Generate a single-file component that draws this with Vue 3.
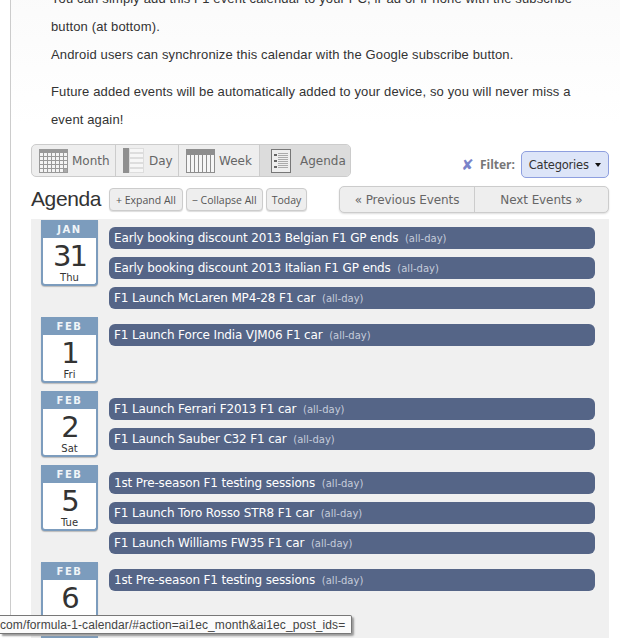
<script setup>
const groups = [
  { mon: 'JAN', day: 31, dow: 'Thu', events: ['Early booking discount 2013 Belgian F1 GP ends', 'Early booking discount 2013 Italian F1 GP ends', 'F1 Launch McLaren MP4-28 F1 car'] },
  { mon: 'FEB', day: 1, dow: 'Fri', events: ['F1 Launch Force India VJM06 F1 car'] },
  { mon: 'FEB', day: 2, dow: 'Sat', events: ['F1 Launch Ferrari F2013 F1 car', 'F1 Launch Sauber C32 F1 car'] },
  { mon: 'FEB', day: 5, dow: 'Tue', events: ['1st Pre-season F1 testing sessions', 'F1 Launch Toro Rosso STR8 F1 car', 'F1 Launch Williams FW35 F1 car'] },
  { mon: 'FEB', day: 6, dow: 'Wed', events: ['1st Pre-season F1 testing sessions'] },
  { mon: '', day: '', dow: '', events: [] },
]
</script>

<template>
  <div class="page">
    <main class="content">
      <section class="intro">
        <p class="clip">You can simply add this F1 event calendar to your PC, iPad or iPhone with the subscribe<br>button (at bottom).<br>Android users can synchronize this calendar with the Google subscribe button.</p>
        <p>Future added events will be automatically added to your device, so you will never miss a<br>event again!</p>
      </section>

      <section class="calendar">
        <div class="topbar">
          <div class="views">
            <a class="view month">
              <svg width="29" height="24" viewBox="0 0 29 24"><rect width="29" height="24" fill="#999"/><g fill="#f4f4f4"><template v-for="r in 5" :key="r"><rect v-for="c in 7" :key="c" :x="(c-1)*4+1" :y="(r-1)*4+4" width="3" height="3"/></template></g><rect x="25" y="20" width="3" height="3" fill="#aaa"/></svg>
              Month
            </a>
            <a class="view day">
              <svg width="21" height="25" viewBox="0 0 21 25"><rect width="6" height="25" fill="#8f8f8f"/><rect x="6" width="15" height="25" fill="#ddd"/><g fill="#f6f6f6"><rect x="7" y="1" width="13" height="3"/><rect x="7" y="6" width="13" height="3"/><rect x="7" y="11" width="13" height="3"/><rect x="7" y="16" width="13" height="3"/><rect x="7" y="21" width="13" height="3"/></g></svg>
              Day
            </a>
            <a class="view week">
              <svg width="29" height="24" viewBox="0 0 29 24"><rect width="29" height="24" fill="#8e8e8e"/><g fill="#f6f6f6"><rect v-for="c in 7" :key="c" :x="(c-1)*4+1" y="6" width="3" height="17"/></g></svg>
              Week
            </a>
            <a class="view agenda active">
              <svg width="20" height="24" viewBox="0 0 20 24"><rect x=".5" y=".5" width="19" height="23" fill="#eee" stroke="#777"/><g fill="#666"><rect x="3" y="5" width="3" height="2"/><rect x="3" y="11" width="3" height="2"/><rect x="3" y="17" width="3" height="2"/></g><g fill="#aaa"><rect x="7" y="4" width="10" height="1"/><rect x="7" y="6" width="10" height="1"/><rect x="7" y="8" width="10" height="1"/><rect x="7" y="10" width="10" height="1"/><rect x="7" y="12" width="10" height="1"/><rect x="7" y="14" width="10" height="1"/><rect x="7" y="16" width="10" height="1"/><rect x="7" y="18" width="10" height="1"/></g></svg>
              Agenda
            </a>
          </div>
          <div class="filter">
            <span class="x">✘</span>
            <b>Filter:</b>
            <button class="cats">Categories <i></i></button>
          </div>
        </div>

        <div class="titlebar">
          <h2>Agenda</h2>
          <div class="tools">
            <button>+ Expand All</button>
            <button>− Collapse All</button>
            <button>Today</button>
          </div>
          <div class="pager">
            <a>« Previous Events</a>
            <a>Next Events »</a>
          </div>
        </div>

        <div class="list">
          <div v-for="(g, i) in groups" :key="i" class="group">
            <div class="date">
              <div class="mon">{{ g.mon }}</div>
              <div class="num">{{ g.day }}</div>
              <div class="dow">{{ g.dow }}</div>
            </div>
            <div class="events">
              <div v-for="e in g.events" :key="e" class="event">{{ e }} <span>(all-day)</span></div>
            </div>
          </div>
        </div>
      </section>
    </main>
    <div class="status">com/formula-1-calendar/#action=ai1ec_month&amp;ai1ec_post_ids=</div>
  </div>
</template>

<style>
html, body { margin: 0; background: #fff; }
</style>

<style scoped>
.page { position: relative; width: 620px; height: 638px; overflow: hidden; font-family: "Liberation Sans", Arial, sans-serif; background: #fff; }
.content { margin-left: 10px; height: 638px; border-left: 1px solid #ccc; box-sizing: border-box; padding-left: 20px; padding-right: 11px; background: linear-gradient(#fafafa, #fff 140px); }
.intro { margin-top: -15px; padding-left: 20px; font-size: 13px; line-height: 28px; color: #333; letter-spacing: .14px; height: 157px; }
.intro p { margin: 0 0 9px; white-space: nowrap; }
.calendar { background: #fff; }
.topbar { display: flex; justify-content: space-between; align-items: flex-end; height: 35px; }
.views { display: flex; height: 33px; box-sizing: border-box; border: 1px solid #ccc; border-radius: 5px; background: #eee; }
.view { display: flex; align-items: center; gap: 4px; font: 12px "DejaVu Sans", sans-serif; color: #666; border-right: 1px solid #ccc; box-sizing: border-box; flex: none; }
.month { width: 84px; padding-left: 7px; }
.day { width: 63px; padding-left: 7px; gap: 5px; }
.week { width: 81px; padding-left: 7px; }
.agenda { width: 90px; padding-left: 11px; gap: 9px; border-right: 0; background: #dcdcdc; border-radius: 0 4px 4px 0; }
.filter { display: flex; align-items: center; gap: 6px; margin-bottom: -1px; font: 13px "DejaVu Sans", sans-serif; }
.x { color: #7a83c9; font-size: 15px; }
.filter b { color: #777; font: 700 12px "Open Sans", sans-serif; }
.cats { width: 88px; height: 27px; padding: 0; border: 1px solid #8e9fdf; border-radius: 5px; background: #dde5f8; color: #333; font: 11.5px "DejaVu Sans", sans-serif; letter-spacing: -.2px; }
.cats i { display: inline-block; margin-left: 3px; vertical-align: 2px; border: 3px solid transparent; border-top: 4px solid #111; border-bottom: 0; }
.titlebar { display: flex; align-items: center; height: 42px; }
h2 { margin: 2px 9px 0 0; font: 400 21px "Liberation Sans", Arial, sans-serif; letter-spacing: -.4px; color: #333; width: 69px; }
.tools { display: flex; gap: 3px; margin-top: 3px; }
.tools button { height: 23px; padding: 0 6px; box-sizing: border-box; border: 1px solid #ccc; border-radius: 4px; background: #eee; color: #555; font: 10.5px "Open Sans", sans-serif; box-shadow: 0 1px 1px #ddd; white-space: nowrap; }
.tools button:nth-child(2) { padding: 0 5px; }
.tools button:nth-child(3) { padding: 0 5px; }
.pager { display: flex; margin-left: auto; margin-top: 3px; height: 27px; box-sizing: border-box; border: 1px solid #ccc; border-radius: 5px; background: #eee; box-shadow: 0 1px 2px #ddd; width: 270px; }
.pager a { display: flex; align-items: center; justify-content: center; padding-top: 1px; font: 12px "DejaVu Sans", sans-serif; letter-spacing: -.1px; color: #666; }
.pager a:first-child { width: 134px; border-right: 1px solid #ccc; }
.pager a:last-child { flex: 1; }
.list { background: #f0f0f0; padding: 1px 14px 0 10px; }
.group { display: flex; gap: 11px; }
.date { width: 57px; height: 66px; margin-bottom: 8px; flex: none; box-sizing: border-box; background: #fff; border: 2px solid #7c9cbd; border-top: 0; border-radius: 0 0 4px 4px; text-align: center; font-family: "DejaVu Sans", sans-serif; color: #333; box-shadow: 0 1px 1px #bbb; }
.mon { margin: 0 -2px; height: 18px; line-height: 19px; background: #7c9cbd; color: #f0f4f8; font-size: 10px; font-weight: 700; letter-spacing: 1.6px; }
.num { height: 30px; font-size: 29px; line-height: 30px; margin-top: 3px; letter-spacing: -2px; }
.dow { font-size: 10px; line-height: 12px; margin-top: 1px; }
.events { flex: 1; padding-top: 7px; }
.event { height: 22px; margin-bottom: 8px; padding-left: 5px; box-sizing: border-box; background: #556587; border-radius: 6px; color: #fff; font: 12px/22px "DejaVu Sans", sans-serif; letter-spacing: -.15px; white-space: nowrap; }
.event span { margin-left: 3px; font-size: 10px; letter-spacing: 0; color: #c5ccdb; }
.status { position: absolute; left: 0; top: 615px; width: 352px; height: 19px; box-sizing: border-box; background: #fbfbfb; border: 1px solid #777; border-left: 0; border-radius: 0 2px 2px 0; box-shadow: 2px 2px 2px #999; font: 12px/18px "Liberation Sans", Arial, sans-serif; letter-spacing: .1px; color: #444; white-space: nowrap; overflow: hidden; }
</style>
